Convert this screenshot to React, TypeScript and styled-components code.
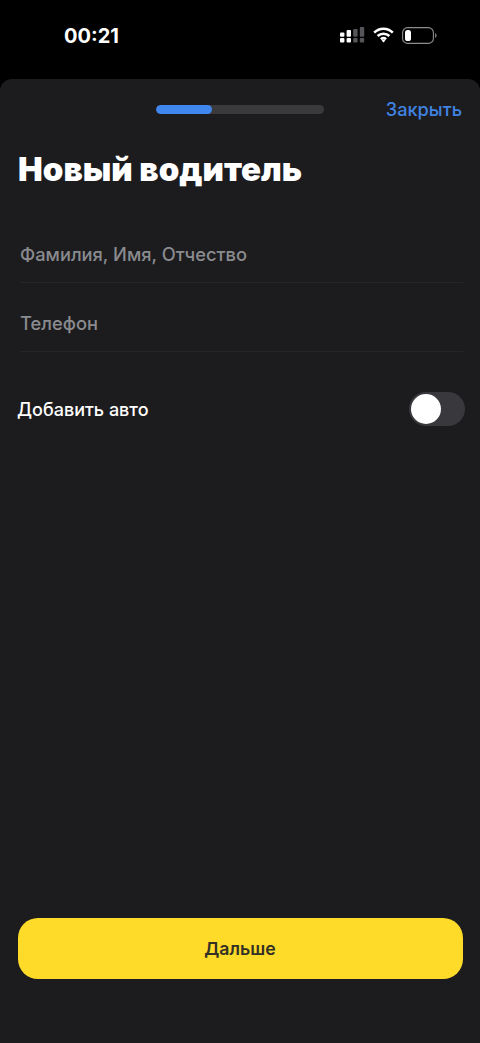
import React from "react";
import styled, { createGlobalStyle } from "styled-components";

const Global = createGlobalStyle`
  html, body { margin: 0; padding: 0; background: #000; }
  * { box-sizing: border-box; }
  #root { height: 1043px; }
`;

const Screen = styled.div`
  width: 480px;
  height: 1043px;
  background: #000;
  display: flex;
  flex-direction: column;
  overflow: hidden;
  font-family: Inter, "Noto Sans", sans-serif;
`;

const StatusBar = styled.div`
  height: 79px;
  flex: none;
  display: flex;
  align-items: flex-start;
  justify-content: space-between;
  padding: 24px 43px 0 64px;
`;

const Time = styled.div`
  color: #fff;
  font-size: 20px;
  font-weight: 700;
  line-height: 23px;
  padding-top: 1px;
`;

const StatusIcons = styled.div`
  display: flex;
  align-items: center;
  gap: 8px;
  height: 22px;
`;

const Sheet = styled.div`
  flex: 1;
  display: flex;
  flex-direction: column;
  background: #1c1c1e;
  border-radius: 12px 12px 0 0;
  padding: 0 18px 64px;
`;

const TopRow = styled.div`
  height: 60px;
  flex: none;
  display: flex;
  justify-content: flex-end;
  align-items: flex-start;
  padding-top: 20px;
  position: relative;
`;

const Track = styled.div`
  position: absolute;
  left: 138px;
  top: 26px;
  width: 168px;
  height: 9px;
  border-radius: 5px;
  background: #3a3a3c;
  overflow: hidden;
`;

const Fill = styled.div<{ $pct: number }>`
  width: ${(p) => p.$pct}%;
  height: 100%;
  border-radius: 5px;
  background: #3f86ee;
`;

const Close = styled.div`
  color: #4083e2;
  font-size: 18.2px;
  font-weight: 500;
  line-height: 21px;
`;

const Title = styled.h1`
  margin: 11px 0 0;
  color: #fff;
  font-size: 33px;
  line-height: 38px;
  font-weight: 900;
`;

const Fields = styled.div`
  margin-top: 36px;
  display: flex;
  flex-direction: column;
`;

const Field = styled.div`
  height: 69px;
  margin: 0 -1px 0 2px;
  display: flex;
  align-items: center;
  padding-top: 12px;
  border-bottom: 1px solid #262628;
  color: #8a8b8f;
  font-size: 18.3px;
  font-weight: 500;
  &:first-child {
    height: 59px;
    padding-top: 2px;
  }
`;

const ToggleRow = styled.div`
  margin-top: 40px;
  display: flex;
  align-items: center;
  justify-content: space-between;
  margin-right: -3px;
`;

const ToggleLabel = styled.div`
  color: #fff;
  font-size: 18px;
  font-weight: 500;
  margin-left: -1px;
`;

const Toggle = styled.div`
  width: 56px;
  height: 34px;
  border-radius: 17px;
  background: #39393d;
  padding: 2px;
`;

const Knob = styled.div`
  width: 30px;
  height: 30px;
  border-radius: 50%;
  background: #fff;
`;

const Spacer = styled.div`
  flex: 1;
`;

const NextButton = styled.button`
  height: 61px;
  flex: none;
  border: 0;
  margin: 0 -0.5px;
  border-radius: 20px;
  background: #ffdb29;
  color: #333026;
  font-family: inherit;
  font-size: 17.7px;
  font-weight: 600;
`;

const Signal = () => (
  <svg width="26" height="17" viewBox="0 0 26 17">
    <g fill="#fff">
      <rect x="1" y="11" width="4.4" height="4.6" rx="1" />
      <rect x="7.6" y="11" width="4.4" height="4.6" rx="1" />
      <rect x="1" y="5.6" width="4.4" height="4.2" rx="1" />
      <rect x="7.6" y="3" width="4.4" height="6.8" rx="1" />
    </g>
    <g fill="#55555a">
      <rect x="14.2" y="11" width="4.4" height="4.6" rx="1" />
      <rect x="20.8" y="11" width="4.4" height="4.6" rx="1" />
      <rect x="14.2" y="2" width="4.4" height="7.8" rx="1" />
      <rect x="20.8" y="0" width="4.4" height="9.8" rx="1" />
    </g>
  </svg>
);

const Wifi = () => (
  <svg width="21" height="16" viewBox="0 0 21 16" fill="none" stroke="#fff" strokeWidth="2.6">
    <path d="M1.2 5.6C6.4.4 14.6.4 19.8 5.6" />
    <path d="M4.6 9C7.9 5.9 13.1 5.9 16.4 9" />
    <path d="M7.9 12.2C9.4 10.9 11.6 10.9 13.1 12.2" />
    <path d="M10.5 15.6L8.6 13.4C9.7 12.6 11.3 12.6 12.4 13.4Z" fill="#fff" stroke="none" />
  </svg>
);

const Battery = () => (
  <svg width="35" height="17" viewBox="0 0 35 17">
    <rect x="0.6" y="0.6" width="30.8" height="15.8" rx="5" fill="none" stroke="#8e8e90" strokeWidth="1.1" />
    <rect x="3" y="3" width="6" height="11" rx="2.6" fill="#fff" />
    <path d="M33 6v5c1.100-.4 1.600-1.400 1.600-2.500S34.100 6.400 33 6Z" fill="#77777a" />
  </svg>
);

export default function App() {
  return (
    <Screen>
      <Global />
      <StatusBar>
        <Time>00:21</Time>
        <StatusIcons>
          <Signal />
          <Wifi />
          <Battery />
        </StatusIcons>
      </StatusBar>
      <Sheet>
        <TopRow>
          <Track>
            <Fill $pct={33.3} />
          </Track>
          <Close>Закрыть</Close>
        </TopRow>
        <Title>Новый водитель</Title>
        <Fields>
          <Field>Фамилия, Имя, Отчество</Field>
          <Field>Телефон</Field>
        </Fields>
        <ToggleRow>
          <ToggleLabel>Добавить авто</ToggleLabel>
          <Toggle>
            <Knob />
          </Toggle>
        </ToggleRow>
        <Spacer />
        <NextButton>Дальше</NextButton>
      </Sheet>
    </Screen>
  );
}
